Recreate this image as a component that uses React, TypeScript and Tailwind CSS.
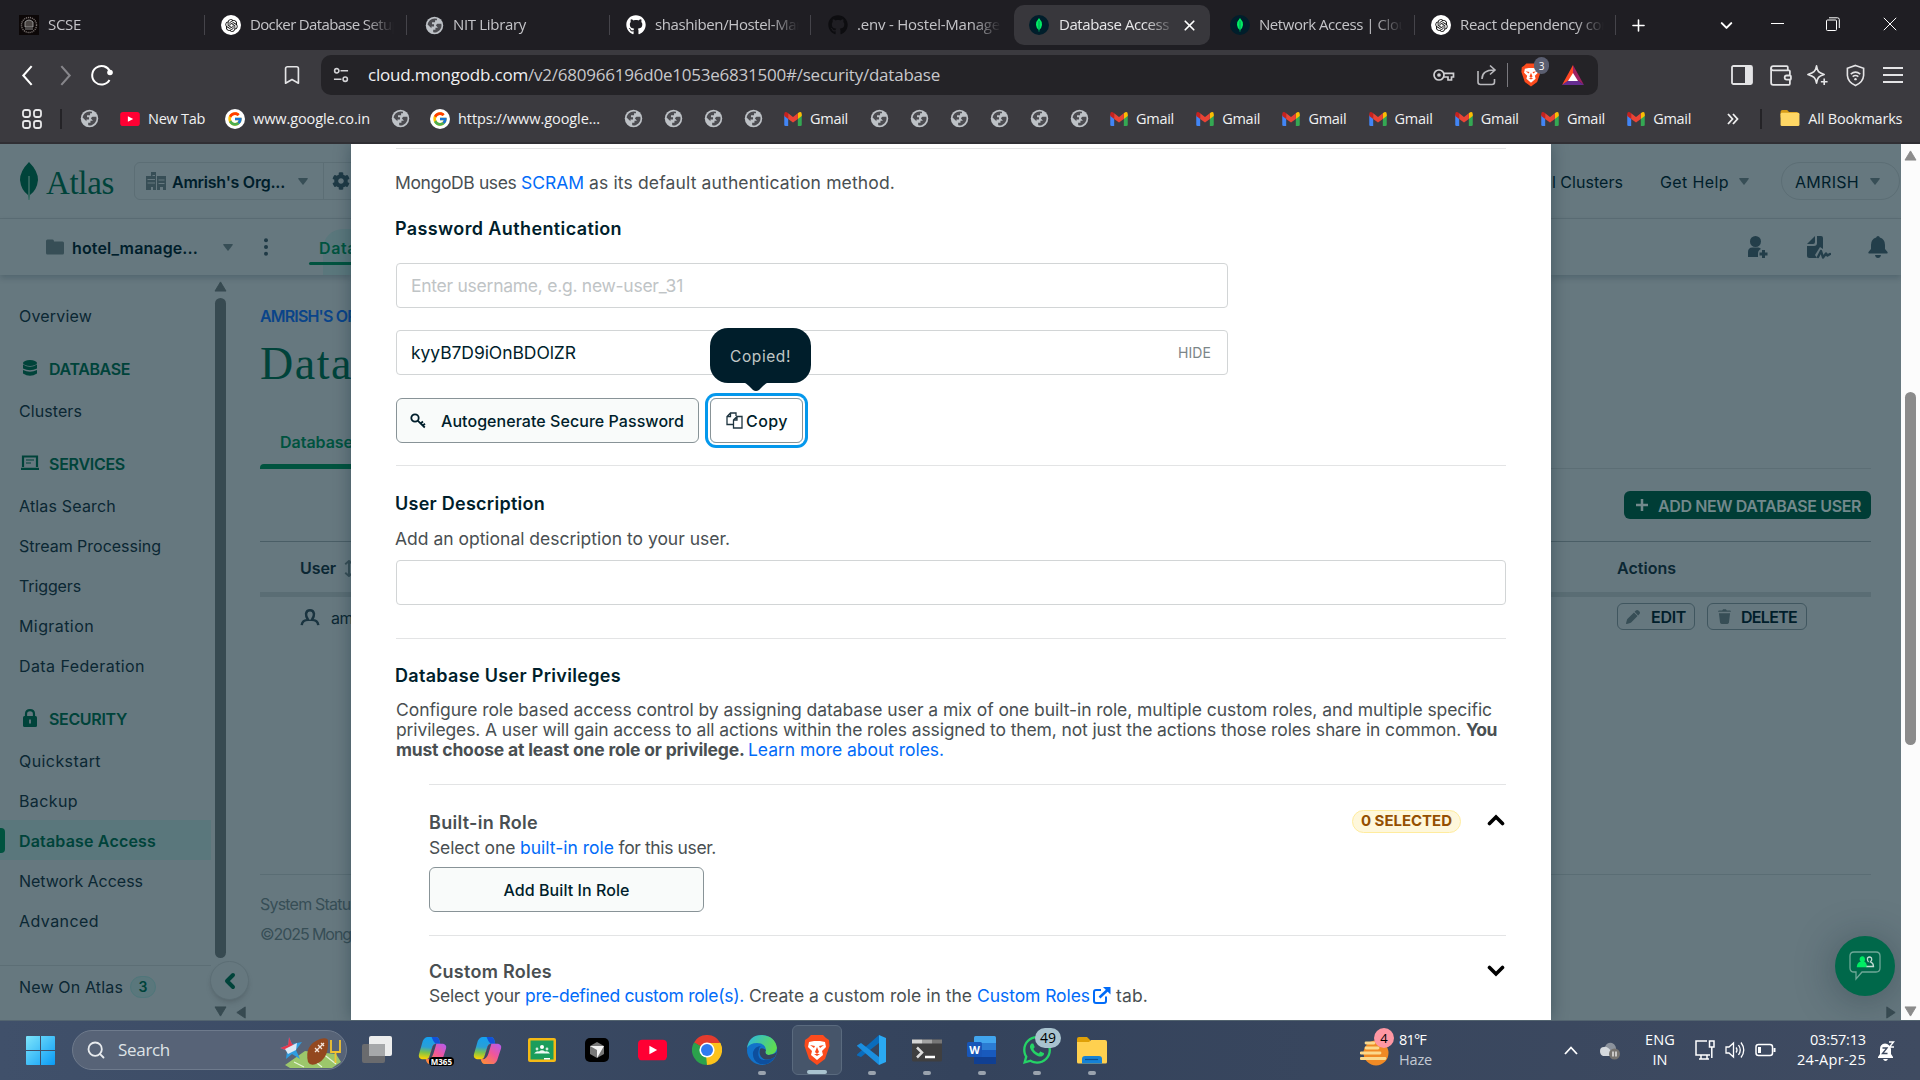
import React, { useLayoutEffect, useRef } from "react";
import { ChevronDown, ChevronLeft, Plus, X, Bookmark, Wallet, Search } from "lucide-react";
import { FaGithub, FaWhatsapp, FaLock, FaPen } from "react-icons/fa6";
import { FaCog as Gear } from "react-icons/fa";
import { FcGoogle } from "react-icons/fc";
import { RiOpenaiFill } from "react-icons/ri";

/* A run of text whose letter spacing is set so that it fills the width w. */
function T({ w, children, className = "" }: { w: number; children: string; className?: string }) {
  const ref = useRef<HTMLSpanElement>(null);
  useLayoutEffect(() => {
    const el = ref.current;
    if (!el) return;
    el.style.letterSpacing = "0px";
    const natural = el.getBoundingClientRect().width;
    el.style.letterSpacing = `${(w - natural) / children.length}px`;
  }, [w, children]);
  return <span ref={ref} className={`inline-block w-max shrink-0 whitespace-pre ${className}`}>{children}</span>;
}

function Cell({ w, children, className = "" }: { w: number; children?: React.ReactNode; className?: string }) {
  return <div className={`flex h-full shrink-0 items-center ${className}`} style={{ width: w }}>{children}</div>;
}

function Globe() {
  return (
    <svg viewBox="0 0 20 20" className="size-[19px] shrink-0">
      <circle cx="10" cy="10" r="9.2" fill="#bdc1c6" />
      <path d="M10 2.6 A7.4 7.4 0 0 0 2.7 9 L6.8 13 V11 H9.5 V8.6 H7.4 V6.6 H10.6 V4.6 H12.6 V2.9 A7 7 0 0 0 10 2.6Z M13 8.2 H17.2 A7.4 7.4 0 0 1 8.6 17.2 V14.6 H11 V12.4 H13.6 L11.4 9.8Z" fill="#4b4b50" />
    </svg>
  );
}
function Gmail() {
  return (
    <svg viewBox="0 0 20 16" className="h-[14px] w-[18px] shrink-0">
      <path d="M0 3 V14.5 Q0 16 1.5 16 H4.5 V6Z" fill="#4285f4" />
      <path d="M20 3 V14.5 Q20 16 18.5 16 H15.5 V6Z" fill="#34a853" />
      <path d="M15.5 1.5 L17 .4 Q20-.8 20 2.5 V4.5 L15.5 8Z" fill="#fbbc04" />
      <path d="M4.5 1.5 L3 .4 Q0-.8 0 2.5 V4.5 L4.5 8Z" fill="#c5221f" />
      <path d="M4.5 1.4 L10 5.7 L15.5 1.4 V8 L10 12 L4.5 8Z" fill="#ea4335" />
    </svg>
  );
}
function Youtube({ className = "h-[14px] w-5" }: { className?: string }) {
  return (
    <svg viewBox="0 0 28 20" className={`shrink-0 ${className}`}>
      <rect width="28" height="20" rx="4" fill="#ff0033" />
      <path d="M11 6 L18.5 10 L11 14Z" fill="#fff" />
    </svg>
  );
}
function OpenAi() {
  return <span className="flex size-5 shrink-0 items-center justify-center rounded-full bg-white"><RiOpenaiFill className="size-[15px] text-black" /></span>;
}
function Mongo() {
  return (
    <svg viewBox="0 0 20 20" className="size-5 shrink-0">
      <circle cx="10" cy="10" r="10" fill="#001e2b" />
      <path d="M10 3 Q13.3 6.5 13 10 Q12.6 13.3 10.3 15 L10 17 L9.7 15 Q7.4 13.3 7 10 Q6.7 6.5 10 3Z" fill="#00ed64" />
      <path d="M10 6 V17" stroke="#00684a" strokeWidth=".6" />
    </svg>
  );
}
function Lion({ className = "" }: { className?: string }) {
  return (
    <svg viewBox="0 0 26 30" className={className}>
      <path d="M7 0 H19 L22 3 L25 5 L25.500 11 L21 24 L13 30 L5 24 L.5 11 L1 5 L4 3Z" fill="#fb4b1d" />
      <path d="M5 7 L10 6 H16 L21 7 L22 12 L18 16 L19 20 L13 25 L7 20 L8 16 L4 12Z" fill="#fff" />
      <path d="M6 10 L11 11 L10 13Z M20 10 L15 11 L16 13Z M13 12 L15 17 L13 19 L11 17Z M10 19 L13 21 L16 19" fill="#fb4b1d" />
    </svg>
  );
}
function Caret({ className = "text-[#374e56]" }: { className?: string }) {
  return <svg viewBox="0 0 10 7" className={`h-[7px] w-[10px] shrink-0 ${className}`}><path d="M.6 0 H9.4 Q10 .3 9.7 .9 L5.5 6.5 Q5 7 4.5 6.5 L.3 .9 Q0 .3 .6 0Z" fill="currentColor" /></svg>;
}
function Tri({ dir, className = "" }: { dir: "up" | "down" | "left" | "right"; className?: string }) {
  const d = { up: "M7 1 L13 11 H1Z", down: "M7 11 L1 1 H13Z", left: "M2 6 L11 0 V12Z", right: "M12 6 L3 0 V12Z" }[dir];
  return <svg viewBox="0 0 14 12" className={`h-[11px] w-[13px] shrink-0 ${className}`}><path d={d} fill="currentColor" stroke="currentColor" strokeWidth="1" strokeLinejoin="round" /></svg>;
}

function Tab({ w, icon, label, lw, sep = true, pl = 17 }: { w: number; icon: React.ReactNode; label: string; lw: number; sep?: boolean; pl?: number }) {
  return (
    <div className="flex h-[50px] shrink-0 items-center" style={{ width: w, paddingLeft: pl }}>
      {icon}
      <div className="-mt-[2px] ml-[9px] w-[144px] shrink-0 overflow-hidden text-[#c4c4c8] [mask-image:linear-gradient(to_right,black_115px,transparent_144px)]">
        <T w={lw}>{label}</T>
      </div>
      <div className={sep ? "ml-auto h-5 w-px bg-[#45444a]" : "hidden"} />
    </div>
  );
}

function TabStrip() {
  return (
    <div className="flex h-[50px] items-center bg-[#1f1e23] text-[15px]">
      <Tab w={205} pl={19} lw={33} label="SCSE" icon={
        <svg viewBox="0 0 20 20" className="size-5 shrink-0"><rect width="20" height="20" fill="#0c0707" /><circle cx="10" cy="10" r="7.5" fill="none" stroke="#77706e" strokeWidth="1.4" strokeDasharray="1.2 .8" /><path d="M6 7 Q10 3 14 7 V12 H6Z M6 14 H14" fill="#4b4644" stroke="#aaa" strokeWidth=".8" /></svg>} />
      <Tab w={202} pl={16} lw={150} label="Docker Database Setup" icon={<OpenAi />} />
      <Tab w={203} lw={73} label="NIT Library" icon={<Globe />} pl={18} />
      <Tab w={201} pl={16} lw={158} label="shashiben/Hostel-Mana" icon={<FaGithub className="size-5 shrink-0 text-white" />} />
      <Tab w={203} lw={143} label=".env - Hostel-Manage" icon={<FaGithub className="size-5 shrink-0 text-[#0d0d10]" />} sep={false} />
      <div className="flex h-10 w-[196px] shrink-0 items-center rounded-[10px] bg-[#38373c] pl-[15px]">
        <Mongo />
        <div className="-mt-[2px] ml-[10px] w-[113px] overflow-hidden text-[#e6e6e8] [mask-image:linear-gradient(to_right,black_85px,transparent_118px)]"><T w={110}>Database Access</T></div>
        <X className="ml-[9px] size-[17px] text-white" strokeWidth={2.4} />
      </div>
      <Tab w={205} pl={20} lw={157} label="Network Access | Cloud" icon={<Mongo />} />
      <Tab w={201} pl={16} lw={150} label="React dependency con" icon={<OpenAi />} />
      <Cell w={86} className="pl-[13px]"><Plus className="size-[19px] text-white" strokeWidth={2} /></Cell>
      <Cell w={48} className="justify-center"><ChevronDown className="size-[19px] text-white" strokeWidth={2.6} /></Cell>
      <Cell w={54} className="justify-center pb-[3px]"><div className="h-px w-[13px] bg-white" /></Cell>
      <Cell w={57} className="justify-center pb-[2px]">
        <svg viewBox="0 0 14 14" className="size-[14px]" fill="none" stroke="#fff"><rect x=".5" y="3" width="10" height="10.5" rx="1" /><path d="M3 .8 H11.5 Q13.3 .8 13.3 2.6 V11" /></svg>
      </Cell>
      <Cell w={58} className="justify-center pb-[2px]"><svg viewBox="0 0 14 14" className="size-[14px]" stroke="#fff"><path d="M.8 .8 L13.2 13.2 M13.2 .8 L.8 13.2" /></svg></Cell>
    </div>
  );
}

function Toolbar() {
  return (
    <div className="flex h-[45px] items-end bg-[#3b3a3f]">
      <div className="flex h-10 w-[321px] shrink-0 items-center text-white">
        <Cell w={46} className="pl-[15px]"><svg viewBox="0 0 24 24" className="size-[25px]" fill="none" stroke="currentColor" strokeWidth="2"><path d="M16 3 L8 12 L16 21" /></svg></Cell>
        <Cell w={38} className="justify-center text-[#87868b]"><svg viewBox="0 0 24 24" className="size-[25px]" fill="none" stroke="currentColor" strokeWidth="2"><path d="M8 3 L16 12 L8 21" /></svg></Cell>
        <Cell w={36} className="justify-center"><svg viewBox="0 0 24 24" className="size-6" fill="none" stroke="currentColor" strokeWidth="2"><path d="M19.5 17 A9.3 9.3 0 1 1 20 8.5" /><circle cx="20" cy="9.5" r="2.8" fill="currentColor" stroke="none" /></svg></Cell>
        <Cell w={201} className="pl-[161px]"><Bookmark className="h-6 w-[22px] text-[#e4e4e6]" strokeWidth={1.8} /></Cell>
      </div>
      <div className="flex h-10 w-[1277px] shrink-0 items-center rounded-[10px] bg-[#242327] pl-[12px] text-[#c8c8cb]">
        <svg viewBox="0 0 17 17" className="size-4 shrink-0" fill="none" stroke="#d4d4d7" strokeWidth="1.7"><circle cx="4" cy="4" r="2.3" /><path d="M8 4 H16 M1 13 H9" /><circle cx="13" cy="13" r="2.3" /></svg>
        <div className="-mt-px ml-[19px] flex text-[17px]"><T w={160} className="text-[#f0f0f2]">cloud.mongodb.com</T><T w={412}>/v2/680966196d0e1053e6831500#/security/database</T></div>
        <svg viewBox="0 0 22 14" className="ml-[493px] h-[14px] w-[22px] shrink-0" fill="none" stroke="#d0d0d3" strokeWidth="1.7"><circle cx="6" cy="7" r="5" /><circle cx="6" cy="7" r="1" fill="#d0d0d3" /><path d="M11 5.3 H20.5 V9 H18.5 V12 H15 V9 H11" /></svg>
        <svg viewBox="0 0 20 22" className="ml-[22px] h-[22px] w-5 shrink-0" fill="none" stroke="#b9b9bd" strokeWidth="1.6"><path d="M1 7 V18 Q1 20.5 3.5 20.5 H15 Q17.5 20.5 17.5 18 V15 M5 15 Q5 6 17 6 M13 1.5 L18 6 L13 10.5" /></svg>
        <div className="ml-[10px] h-6 w-px bg-[#7a797e]" />
        <div className="relative ml-[13px] flex items-center">
          <Lion className="h-[26px] w-5" />
          <span className="absolute -top-[5px] left-[13px] flex h-[17px] w-[15px] items-center justify-center rounded-full bg-[#5a5e70] text-[10px] leading-none text-white">3</span>
        </div>
        <svg viewBox="0 0 22 20" className="ml-[21px] h-5 w-[22px] shrink-0"><path d="M11 0 L0 20 L11 13Z" fill="#ff4724" /><path d="M11 0 L22 20 L11 12Z" fill="#9e1f63" /><path d="M0 20 H22 L11 12Z" fill="#662d91" /><path d="M11 8 L16 16 H6Z" fill="#fff" /></svg>
      </div>
      <div className="flex h-10 flex-1 items-center text-[#e4e4e6]">
        <Cell w={163} className="justify-end pr-[8px]"><svg viewBox="0 0 22 20" className="h-5 w-[22px]"><rect x="1" y="1" width="20" height="18" rx="1.5" fill="none" stroke="currentColor" strokeWidth="1.8" /><path d="M14 1 H21 V19 H14Z" fill="currentColor" /></svg></Cell>
        <Cell w={38} className="justify-center"><Wallet className="size-[25px]" strokeWidth={1.7} /></Cell>
        <Cell w={37} className="justify-center"><svg viewBox="0 0 24 24" className="size-[23px]" fill="none" stroke="currentColor" strokeWidth="1.7" strokeLinejoin="round"><path d="M11 2 C12 8 13 9 19 11 C13 13 12 14 11 20 C10 14 8 13 2 11 C8 9 10 8 11 2Z" fill="none" /><path d="M19 15 V22 M15.5 18.5 H22.5" /></svg></Cell>
        <Cell w={38} className="justify-center"><svg viewBox="0 0 22 24" className="h-[25px] w-[21px]" fill="none" stroke="currentColor" strokeWidth="1.7"><path d="M11 1.5 L19.5 4.5 V12 Q19 19 11 22.5 Q3 19 2.5 12 V4.5Z" /><path d="M6 10.5 Q11 6.5 16 10.5 M8 13.2 Q11 10.8 14 13.2" /><circle cx="11" cy="15.8" r="1.3" fill="currentColor" stroke="none" /></svg></Cell>
        <Cell w={38} className="justify-center"><svg viewBox="0 0 20 16" className="h-4 w-5" stroke="currentColor" strokeWidth="2"><path d="M0 1 H20 M0 8 H20 M0 15 H20" /></svg></Cell>
      </div>
    </div>
  );
}

function Bookmarks() {
  return (
    <div className="flex h-[49px] items-center border-b-2 border-[#302f34] bg-[#3b3a3f] text-[14.5px] text-[#f1f1f2]">
      <Cell w={60} className="pl-[22px]">
        <svg viewBox="0 0 20 20" className="size-5" fill="none" stroke="#e8e8ea" strokeWidth="1.8"><rect x="1" y="1" width="7" height="7" rx="2.2" /><rect x="12" y="1" width="7" height="7" rx="2.2" /><rect x="1" y="12" width="7" height="7" rx="2.2" /><rect x="12" y="12" width="7" height="7" rx="2.2" /></svg>
      </Cell>
      <div className="h-5 w-[2px] shrink-0 bg-[#242327]" />
      <Cell w={58} className="pl-[18px]"><Globe /></Cell>
      <Cell w={105}><Youtube /><T w={57} className="ml-2">New Tab</T></Cell>
      <Cell w={166}><span className="flex size-5 items-center justify-center rounded-full bg-white"><FcGoogle className="size-4" /></span><T w={117} className="ml-2">www.google.co.in</T></Cell>
      <Cell w={39}><Globe /></Cell>
      <Cell w={194}><span className="flex size-5 items-center justify-center rounded-full bg-white"><FcGoogle className="size-4" /></span><T w={142} className="ml-2">https://www.google...</T></Cell>
      {[0, 1, 2, 3].map((i) => <Cell key={i} w={40}><Globe /></Cell>)}
      <Cell w={86}><Gmail /><T w={38} className="ml-2">Gmail</T></Cell>
      {[0, 1, 2, 3, 4, 5].map((i) => <Cell key={i} w={40}><Globe /></Cell>)}
      {[0, 1, 2, 3, 4, 5, 6].map((i) => <Cell key={i} w={86.2}><Gmail /><T w={38} className="ml-2">Gmail</T></Cell>)}
      <Cell w={47} className="pl-[14px]"><svg viewBox="0 0 12 12" className="size-3" fill="none" stroke="#f0f0f0" strokeWidth="1.8"><path d="M1 1 L5.5 6 L1 11 M6 1 L10.5 6 L6 11" /></svg></Cell>
      <div className="h-5 w-[2px] shrink-0 bg-[#242327]" />
      <svg viewBox="0 0 20 18" className="ml-[18px] h-[17px] w-5 shrink-0"><path d="M0 2 Q0 0 2 0 H7 L9 2 H18 V8 H0Z" fill="#d99e1a" /><rect y="3" width="20" height="14" rx="1.5" fill="#ffd765" /></svg>
      <T w={94} className="ml-2">All Bookmarks</T>
    </div>
  );
}

const navItem = "flex h-10 shrink-0 items-center pl-[19px] pt-[2px]";
function NavHead({ icon, label, w }: { icon: React.ReactNode; label: string; w: number }) {
  return (
    <div className="flex h-[55px] shrink-0 items-center pl-5 pt-[11px] font-semibold text-[#00433a]">
      <span className="flex w-5 justify-center">{icon}</span><T w={w} className="ml-[9px] mt-px">{label}</T>
    </div>
  );
}

function LeftSide() {
  return (
    <div className="flex w-[351px] shrink-0 flex-col overflow-hidden bg-[#66787f] font-[Inter,sans-serif] text-[16px] text-[#0b2733]">
      <div className="flex h-[75px] shrink-0 items-center border-b border-[#5c6e75] pl-5">
        <svg viewBox="0 0 18 38" className="h-[38px] w-[18px] shrink-0"><path d="M9 0 Q18 9 18 18 Q17 28 10 33 L9.3 38 H8.7 L8 33 Q1 28 0 18 Q0 9 9 0Z" fill="#00433a" /><path d="M9 14 V38" stroke="#4f7b73" strokeWidth="1.2" /></svg>
        <T w={68} className="ml-2 mt-[6px] font-['Liberation_Serif',serif] text-[33px] text-[#00433a]">Atlas</T>
        <div className="ml-5 flex h-[38px] w-[230px] shrink-0 items-center rounded-l-md border border-[#5c6e75]">
          <svg viewBox="0 0 20 18" className="ml-[11px] h-[18px] w-5 shrink-0 fill-[#374e56]"><path d="M0 4 H5 V0 H10 V18 H7 V15 H5 V18 H0Z M11 4 H20 V18 H17 V15 H14 V18 H11Z" /><path d="M1.5 7.5 H9 M1.5 11 H9 M12.5 8 H18.5 M12.5 11.5 H18.5 M6.5 3.5 H9" stroke="#66787f" strokeWidth="1.2" /></svg>
          <T w={113} className="ml-[6px] mt-[2px] font-semibold text-[#001e2b]">Amrish's Org...</T>
          <Caret className="ml-[13px] text-[#374e56]" />
          <div className="ml-[15px] h-full w-px bg-[#5c6e75]" />
          <Gear className="ml-2 size-[18px] shrink-0 text-[#1f3a46]" />
        </div>
      </div>
      <div className="relative z-10 flex h-14 shrink-0 items-center bg-[#66787f] pl-[46px] shadow-[0_3px_6px_rgba(0,30,43,0.2)]">
        <svg viewBox="0 0 18 16" className="h-4 w-[18px] shrink-0 fill-[#374e56]"><path d="M0 2 Q0 .5 1.5 .5 H6.5 Q8 .5 8 2.5 H16.5 Q18 2.5 18 4 V14 Q18 15.500 16.5 15.5 H1.500 Q0 15.500 0 14Z" /></svg>
        <T w={126} className="ml-[8px] mt-[2px] font-semibold text-[#001e2b]">hotel_manage...</T>
        <Caret className="ml-[25px] text-[#374e56]" />
        <svg viewBox="0 0 4 18" className="ml-[31px] h-[18px] w-1 shrink-0 fill-[#1f3a46]"><circle cx="2" cy="2.200" r="2" /><circle cx="2" cy="9" r="2" /><circle cx="2" cy="15.800" r="2" /></svg>
        <div className="relative ml-[41px] flex h-full w-[60px] shrink-0 items-center pl-[10px]">
          <div className="absolute left-[14px] top-[10px] h-[46px] w-8 rounded-tl-[20px] bg-[#5a777c]" />
          <T w={38} className="relative mt-[2px] font-semibold text-[#00533f]">Data</T>
          <div className="absolute bottom-[10px] left-0 h-[3px] w-full rounded-l bg-[#00533f]" />
        </div>
      </div>
      <div className="flex flex-1">
        <div className="flex w-[211px] shrink-0 flex-col pt-5">
          <div className={navItem}><T w={73}>Overview</T></div>
          <NavHead label="DATABASE" w={81} icon={<svg viewBox="0 0 14 16" className="h-4 w-[14px]" fill="#00433a"><ellipse cx="7" cy="3" rx="7" ry="3" /><path d="M0 4.600 Q7 9 14 4.600 V8.500 Q7 12 0 8.500Z M0 10 Q7 13.500 14 10 V13.500 Q7 18 0 13.500Z" /></svg>} />
          <div className={navItem}><T w={63}>Clusters</T></div>
          <NavHead label="SERVICES" w={76} icon={<svg viewBox="0 0 18 16" className="h-4 w-[18px]" fill="none" stroke="#00433a" strokeWidth="2"><path d="M2 12 V1.500 H16 V12 M0 13.800 H18" strokeWidth="2.200" /><path d="M5 5 H13 M5 8 H10" strokeWidth="1.200" /></svg>} />
          <div className={navItem}><T w={97}>Atlas Search</T></div>
          <div className={navItem}><T w={142}>Stream Processing</T></div>
          <div className={navItem}><T w={62}>Triggers</T></div>
          <div className={navItem}><T w={75}>Migration</T></div>
          <div className={navItem}><T w={126}>Data Federation</T></div>
          <NavHead label="SECURITY" w={78} icon={<svg viewBox="0 0 14 18" className="h-[18px] w-[14px]"><path d="M3 8 V5 Q3 1.200 7 1.200 Q11 1.200 11 5 V8" fill="none" stroke="#00433a" strokeWidth="2.200" /><rect y="7" width="14" height="11" rx="1.500" fill="#00433a" /><path d="M7 10.500 V14.500" stroke="#66787f" strokeWidth="1.800" /></svg>} />
          <div className={navItem}><T w={82}>Quickstart</T></div>
          <div className={navItem}><T w={59}>Backup</T></div>
          <div className={`${navItem} relative bg-[#5a777c] font-semibold text-[#00433a]`}>
            <div className="absolute left-0 top-2 h-[25px] w-[5px] rounded-r bg-[#00533f]" />
            <T w={137}>Database Access</T>
          </div>
          <div className={navItem}><T w={124}>Network Access</T></div>
          <div className={navItem}><T w={80}>Advanced</T></div>
          <div className="mt-[25px] flex h-[42px] items-center border-t border-[#5c6e75] pl-[19px]">
            <T w={104}>New On Atlas</T>
            <span className="ml-[7px] flex h-[22px] w-[26px] items-center justify-center rounded-full border border-[#4f767a] bg-[#5a777c] text-[14px] font-semibold text-[#00433a]">3</span>
          </div>
        </div>
        <div className="relative flex w-[49px] shrink-0 flex-col pl-[3px] pt-[6px] text-[#374a51]">
          <Tri dir="up" />
          <div className="ml-px mt-[6px] h-[660px] w-[11px] rounded-full bg-[#374a51]" />
          <div className="absolute -left-px top-[686px] z-10 flex size-[39px] items-center justify-center rounded-full border border-[#5c6e75] bg-[#66787f] shadow-md"><ChevronLeft className="size-6 text-[#00433a]" strokeWidth={4} /></div>
          <div className="mt-[48px] flex gap-[8px]"><Tri dir="down" /><Tri dir="left" className="h-[13px]" /></div>
        </div>
        <div className="flex flex-1 flex-col whitespace-nowrap">
          <div className="mt-[25px] flex h-8 items-center font-semibold text-[#0a4489]"><T w={108}>AMRISH'S ORG</T></div>
          <div className="mt-[8px] flex h-[46px] items-center font-['Liberation_Serif',serif] text-[46px] text-[#00433a]"><T w={93}>Data</T></div>
          <div className="mt-[38px] flex h-9 items-center pl-5 font-semibold text-[#00533f]"><T w={73}>Database</T></div>
          <div className="mt-[4px] h-[5px] shrink-0 rounded-tl bg-[#00533f]" />
          <div className="mt-[72px] flex h-[51px] items-center border-t border-[#4a5e66] pl-[40px] pt-[2px] font-semibold"><T w={36}>User</T>
            <svg viewBox="0 0 10 18" className="ml-2 h-[17px] w-[10px] shrink-0" fill="none" stroke="#374e56" strokeWidth="2"><path d="M5 1 V17 M1 4.500 L5 1 L9 4.500 M1 13.500 L5 17 L9 13.500" /></svg>
          </div>
          <div className="h-[5px] shrink-0 bg-[#5a6d74]" />
          <div className="flex h-10 items-center pl-10"><svg viewBox="0 0 20 18" className="h-[17px] w-5 shrink-0" fill="none" stroke="#1a3440" strokeWidth="2.600"><path d="M1.200 17 Q2 11.500 8 11.500 Q5.500 8.500 5.800 5 Q6.500 1.300 10 1.300 Q13.500 1.300 14.200 5 Q14.500 8.500 12 11.500 Q18 11.500 18.800 17" /></svg><T w={22} className="ml-[11px] mt-px">am</T></div>
          <div className="mt-[237px] h-px shrink-0 bg-[#5a6d74]" />
          <div className="mt-[14px] flex h-[30px] items-center text-[#374e56]"><T w={98}>System Status</T></div>
          <div className="flex h-[30px] items-center text-[#374e56]"><T w={91}>©2025 Mong</T></div>
        </div>
      </div>
    </div>
  );
}

const outlineBtn = "flex items-center rounded-md border border-[#889397] bg-[#f9fbfa] text-[#001e2b] font-medium";
const link = "text-[#016bf8]";

function Modal() {
  return (
    <div className="relative z-20 flex w-[1200px] shrink-0 flex-col overflow-visible bg-white pl-[45px] pr-[45px] font-[Inter,sans-serif] text-[17.5px] text-[#494f52] shadow-[0_0_16px_rgba(0,30,43,0.35)]">
      <div className="mt-1 h-px shrink-0 bg-[#e3e4e5]" />
      <div className="-ml-px flex h-[66px] shrink-0 items-center pt-[2px]"><T w={126}>MongoDB uses </T><T w={63} className={link}>SCRAM</T><T w={311}> as its default authentication method.</T></div>
      <div className="-ml-px flex h-[27px] shrink-0 items-center text-[18px] font-semibold text-[#001e2b]"><T w={227}>Password Authentication</T></div>
      <div className="mt-[21px] flex h-[45px] w-[832px] shrink-0 items-center rounded border border-[#d2d5d6] pl-[14px] pt-[2px] text-[#bfc4c6]"><T w={272}>Enter username, e.g. new-user_31</T></div>
      <div className="mt-[22px] flex h-[45px] w-[832px] shrink-0 items-center rounded border border-[#d2d5d6] pl-[14px] pr-4 text-[#001e2b]">
        <T w={165} className="mt-[2px]">kyyB7D9iOnBDOlZR</T><T w={33} className="-mt-px ml-auto text-[14px] text-[#7c8689]">HIDE</T>
      </div>
      <div className="mt-[23px] flex h-[45px] shrink-0">
        <div className={`${outlineBtn} w-[303px] pl-[13px] text-[16px]`}>
          <svg viewBox="0 0 16 16" className="size-4 shrink-0" fill="none" stroke="#001e2b" strokeWidth="1.800"><circle cx="5" cy="5" r="3.700" /><path d="M7.700 7.700 L14.800 14.500 M10.500 10.500 L13 8.500 M12.800 12.500 L15 10.800" /></svg>
          <T w={243} className="ml-[15px]">Autogenerate Secure Password</T>
        </div>
        <div className="relative ml-[11px] flex w-[93px] items-center rounded-md border border-[#889397] pl-[15px] text-[16px] font-medium text-[#001e2b] shadow-[0_0_0_2px_white,0_0_0_5px_#0498ec]">
          <svg viewBox="0 0 17 17" className="size-[17px] shrink-0" fill="none" stroke="#1f3540" strokeWidth="1.300"><path d="M10 4 V1 H4.500 L1 4.500 V12.500 H7 M4.500 1 V4.500 H1 M7.500 8 L11 4.500 H16 V16 H7.500Z M11 4.500 V8 H7.500" /></svg>
          <T w={42} className="ml-[3px]">Copy</T>
          <div className="absolute -top-[71px] left-[-1px] flex h-[55px] w-[101px] items-center justify-center rounded-[18px] bg-[#001e2b] pt-[2px] text-[15.5px] font-normal text-[#c1c7c6]">
            <T w={61}>Copied!</T>
            <svg viewBox="0 0 26 9" className="absolute left-[33px] top-[54px] h-[9px] w-[26px]"><path d="M0 0 H26 Q23 1 20 4 L16 8 Q13 10 10 8 L6 4 Q3 1 0 0Z" fill="#001e2b" /></svg>
          </div>
        </div>
      </div>
      <div className="mt-[22px] h-px shrink-0 bg-[#e3e4e5]" />
      <div className="-ml-px mt-[18px] flex h-9 shrink-0 items-center pt-[2px] text-[18px] font-semibold text-[#001e2b]"><T w={150}>User Description</T></div>
      <div className="-ml-px flex h-9 shrink-0 items-center pt-[2px]"><T w={335}>Add an optional description to your user.</T></div>
      <div className="mt-1 h-[45px] shrink-0 rounded border border-[#d2d5d6]" />
      <div className="mt-[33px] h-px shrink-0 bg-[#e3e4e5]" />
      <div className="-ml-px mt-[17px] flex h-9 shrink-0 items-center pt-[2px] text-[18px] font-semibold text-[#001e2b]"><T w={226}>Database User Privileges</T></div>
      <div className="mt-2 flex h-[60px] shrink-0 flex-col leading-5">
        <div className="flex"><T w={1096}>Configure role based access control by assigning database user a mix of one built-in role, multiple custom roles, and multiple specific</T></div>
        <div className="flex"><T w={1070}>privileges. A user will gain access to all actions within the roles assigned to them, not just the actions those roles share in common. </T><T w={31} className="font-bold">You</T></div>
        <div className="flex"><T w={352} className="font-bold">must choose at least one role or privilege. </T><T w={196} className={link}>Learn more about roles.</T></div>
      </div>
      <div className="mt-6 flex flex-1 flex-col pl-[33px]">
        <div className="h-px shrink-0 bg-[#e3e4e5]" />
        <div className="mt-[23px] flex h-[26px] shrink-0 items-center text-[18px] font-semibold"><T w={109} className="mt-[2px]">Built-in Role</T>
          <div className="ml-auto mr-[26px] flex h-[23px] w-[109px] items-center justify-center rounded-full border border-[#ffec9e] bg-[#fef7db] text-[15px] font-bold text-[#944f01]"><T w={91}>0 SELECTED</T></div>
          <svg viewBox="0 0 18 12" className="-mt-[2px] mr-[1px] h-3 w-[18px]" fill="none" stroke="#000" strokeWidth="3.600" strokeLinecap="round"><path d="M2.500 9.500 L9 3 L15.500 9.500" /></svg>
        </div>
        <div className="flex h-[27px] shrink-0 items-center pt-[2px]"><T w={91}>Select one </T><T w={94} className={link}>built-in role</T><T w={102}> for this user.</T></div>
        <div className={`${outlineBtn} mt-[6px] h-[45px] w-[275px] shrink-0 justify-center text-[16px]`}><T w={126}>Add Built In Role</T></div>
        <div className="mt-[23px] h-px shrink-0 bg-[#e3e4e5]" />
        <div className="mt-[21px] flex h-[26px] shrink-0 items-center pt-[2px] text-[18px] font-semibold"><T w={123}>Custom Roles</T>
          <svg viewBox="0 0 18 12" className="ml-auto mr-[1px] h-3 w-[18px]" fill="none" stroke="#000" strokeWidth="3.600" strokeLinecap="round"><path d="M2.500 2.500 L9 9 L15.500 2.500" /></svg>
        </div>
        <div className="flex h-[25px] shrink-0 items-center pt-[2px]"><T w={96}>Select your </T><T w={219} className={link}>pre-defined custom role(s).</T><T w={233}> Create a custom role in the </T><T w={113} className={link}>Custom Roles</T>
          <svg viewBox="0 0 19 17" className="-mt-[3px] ml-[2px] h-[17px] w-[19px] shrink-0" fill="none" stroke="#016bf8" strokeWidth="2"><path d="M9 3 H4 Q2 3 2 5 V14 Q2 16 4 16 H12 Q14 16 14 14 V9.500" /><path d="M7.500 10.500 L15.500 3" strokeWidth="2.600" /><path d="M11 0 H18.500 V7.500Z" fill="#016bf8" stroke="none" /></svg>
          <T w={37}> tab.</T>
        </div>
      </div>
    </div>
  );
}

function RightSide() {
  return (
    <div className="relative flex w-[350px] shrink-0 flex-col overflow-hidden bg-[#66787f] font-[Inter,sans-serif] text-[16px] text-[#001e2b]">
      <div className="flex h-[75px] shrink-0 items-center border-b border-[#5c6e75]">
        <div className="mt-[2px] flex w-[72px] justify-end overflow-hidden"><T w={75}>ll Clusters</T></div>
        <T w={69} className="ml-[37px] mt-[2px]">Get Help</T>
        <Caret className="ml-[10px] text-[#374e56]" />
        <div className="ml-8 flex h-[38px] w-[119px] items-center rounded-full border border-[#5c6e75] pl-[13px]"><T w={64} className="mt-[2px]">AMRISH</T><Caret className="ml-[11px] text-[#374e56]" /></div>
      </div>
      <div className="flex h-14 shrink-0 items-center border-[#5c6e75] pl-[197px] text-[#233e4a] shadow-[0_3px_6px_rgba(0,30,43,0.2)]">
        <svg viewBox="0 0 20 22" className="h-[22px] w-5 shrink-0 fill-current"><circle cx="7.500" cy="5.500" r="5.500" /><path d="M0 21 V16 Q0 11.500 4.500 11.500 H10.500 Q12 11.500 13 13 Q10 14 10 17.500 V21Z" /><path d="M15.500 14 V22 M11.500 18 H19.500" stroke="currentColor" strokeWidth="3" /></svg>
        <svg viewBox="0 0 24 23" className="ml-[39px] h-[23px] w-6 shrink-0 fill-current"><path d="M8 0 V6 Q8 8 6 8 H0Z M10 0 H14 Q16 0 16 2 V13 L13 11 L8 19 L10 22 H2.500 Q0 22 0 19.500 V10 H7 Q10 10 10 7Z" /><path d="M11 21 L14 15 L16 21.500 L19 17.500 L20.500 19.500 L23 18" fill="none" stroke="currentColor" strokeWidth="2.400" strokeLinejoin="round" strokeLinecap="round" /></svg>
        <svg viewBox="0 0 20 22" className="ml-[37px] h-[22px] w-5 shrink-0 fill-current"><path d="M10 0 Q11.500 0 11.800 1.500 Q17 3 17 9 V13 L19.500 16 Q20 17.500 19 17.500 H1 Q0 17.500 .5 16 L3 13 V9 Q3 3 8.200 1.500 Q8.500 0 10 0Z M7 19 H13 Q12.500 22 10 22 Q7.500 22 7 19Z" /></svg>
      </div>
      <div className="mt-[193px] mr-[30px] flex h-[73px] shrink-0 items-center justify-end border-t border-[#5c6e75]">
        <div className="flex h-7 w-[247px] items-center rounded-md bg-[#003d36] pl-3 font-semibold text-[#73898c]"><svg viewBox="0 0 12 12" className="size-3" stroke="currentColor" strokeWidth="2.500"><path d="M6 0 V12 M0 6 H12" /></svg><T w={203} className="ml-[10px] mt-px">ADD NEW DATABASE USER</T></div>
      </div>
      <div className="mr-[30px] flex h-[51px] shrink-0 items-center border-t border-[#4a5e66] pl-[66px] pt-[2px] font-semibold text-[#0b2733]"><T w={59}>Actions</T></div>
      <div className="mr-[30px] h-[5px] shrink-0 bg-[#5a6d74]" />
      <div className="mt-[6px] flex h-[27px] shrink-0 gap-3 pl-[66px] font-semibold">
        <div className="flex w-[78px] items-center rounded-md border border-[#40565f] pl-[8px]"><FaPen className="size-[14px] text-[#374e56]" /><T w={35} className="ml-[11px]">EDIT</T></div>
        <div className="flex w-[100px] items-center rounded-md border border-[#40565f] pl-[10px]"><svg viewBox="0 0 14 16" className="h-[15px] w-[13px] fill-[#374e56]"><path d="M0 3 Q0 1.500 1.500 1.500 H4.500 L5.500 .3 H8.500 L9.500 1.500 H12.500 Q14 1.500 14 3Z M1 4.500 H13 L11.800 14.500 Q11.500 16 10 16 H4 Q2.500 16 2.200 14.500Z" /></svg><T w={56} className="ml-[10px]">DELETE</T></div>
      </div>
      <div className="mt-[244px] mr-[30px] h-px shrink-0 bg-[#5a6d74]" />
      <div className="ml-[284px] mt-[61px] flex size-[60px] shrink-0 items-center justify-center rounded-full bg-[#00684a] shadow-[0_4px_40px_rgba(20,40,50,0.4)]">
        <svg viewBox="0 0 32 30" className="h-[30px] w-8" fill="none" stroke="#6fa898" strokeWidth="1.300"><path d="M5 1 H27 Q31 1 31 5 V17 Q31 21 27 21 H13 L7 28 V21 H5 Q1 21 1 17 V5 Q1 1 5 1Z" /><path d="M8.500 15.500 Q9 11.500 13 11 Q10.500 9 11.500 7 Q13.500 5 15 7 Q16 9.500 14 11 Q17 11.500 17.300 15.500Z" fill="#00ed64" stroke="#00ed64" /><path d="M17.500 15.500 H24.500 Q24.500 12 21.500 11 Q23.500 9 22.500 7 Q20.500 5 18.500 7 Q18 9.500 19.500 11" stroke="#c5ddd5" /></svg>
      </div>
      <Tri dir="right" className="ml-[333px] mt-[10px] h-[13px] text-[#374a51]" />
    </div>
  );
}

function TaskIcon({ children, dot = false, active = false }: { children: React.ReactNode; dot?: boolean; active?: boolean }) {
  return (
    <div className="flex h-full w-[55px] shrink-0 items-center justify-center pb-px">
      <div className={`relative flex h-[50px] w-[50px] items-center justify-center rounded-md ${active ? "border border-[#5a6a7e] bg-[#46556a]" : ""}`}>
        {children}
        {dot && <div className={`absolute bottom-0 h-1 rounded-full ${active ? "w-5 bg-[#a9c3cf]" : "w-2 bg-[#9aa3ae]"}`} />}
      </div>
    </div>
  );
}

function Copilot({ id }: { id: string }) {
  return (
    <svg viewBox="0 0 30 30" className="size-[29px]">
      <defs>
        <linearGradient id={`${id}a`} x1=".4" y1="0" x2=".3" y2="1"><stop offset="0" stopColor="#14a0f0" /><stop offset=".45" stopColor="#2a9fd6" /><stop offset=".7" stopColor="#7cc24a" /><stop offset="1" stopColor="#ffd400" /></linearGradient>
        <linearGradient id={`${id}b`} x1="1" y1="0" x2=".2" y2="1"><stop offset="0" stopColor="#b25cf0" /><stop offset=".5" stopColor="#f0569a" /><stop offset="1" stopColor="#ff8a3c" /></linearGradient>
      </defs>
      <path d="M10 1 H19 Q21 1 22 4 L23 8 H19 Q16 8 15 11 L12 21 Q11 24 8 24 H4 Q0 23 1 19 L5 5 Q7 1 10 1Z" fill={`url(#${id}a)`} />
      <path d="M14 1 H19 Q21 1 22 4 L23 8 H18 Q15.500 5 14 1Z" fill="#1351d8" />
      <path d="M20 29 H12 Q9 29 8 24 Q11 24 12 21 L15 11 Q16 8 19 8 H26 Q30 9 29 13 L25 25 Q23 29 20 29Z" fill={`url(#${id}b)`} />
      <path d="M13.500 16 L15 11 Q16 8 19 8 L16 18 Q14 24 10 24 Q11.500 23 12 21Z" fill="#3b4a63" />
    </svg>
  );
}

function Taskbar() {
  return (
    <div className="flex h-[60px] items-center border-t border-[#53646f] bg-gradient-to-r from-[#40506a] via-[#34435c] to-[#3f4b61] text-[14.500px] text-white">
      <Cell w={72} className="pb-px pl-[26px]">
        <svg viewBox="0 0 29 29" className="size-[29px]"><defs><linearGradient id="win" x1="0" y1="0" x2="1" y2="1"><stop offset="0" stopColor="#7ee5fb" /><stop offset="1" stopColor="#0a9bf5" /></linearGradient></defs><path d="M0 1 Q0 0 1 0 H14 V14 H0Z M15 0 H28 Q29 0 29 1 V14 H15Z M0 15 H14 V29 H1 Q0 29 0 28Z M15 15 H29 V28 Q29 29 28 29 H15Z" fill="url(#win)" /></svg>
      </Cell>
      <div className="-mt-px flex h-10 w-[275px] shrink-0 items-center rounded-full border border-[#6e7a8c] bg-[#576377] pl-[13px]">
        <Search className="size-[20px] text-[#e8ebee]" strokeWidth={2.200} />
        <T w={52} className="ml-3 text-[17px] text-[#dfe3e7]">Search</T>
        <svg viewBox="0 0 62 38" className="ml-[110px] h-[38px] w-[62px] shrink-0">
          <path d="M5 34 L25 20 L56 23 L61 31 L52 37 H10Z" fill="#9cc76b" /><path d="M14 31 L24 36 M28 25 L42 36 M42 22 L56 33" stroke="#e6f5d6" strokeWidth="1.200" />
          <path d="M9 6 L12 13 L22 11 L16 19 L20 28 L12 23 L6 28 L7 20 L0 17 L8 14Z" fill="#2f9de0" /><path d="M9 6 L12 13 L15 14 L8 20 L0 17 L8 14Z" fill="#e5394c" /><path d="M5 18 L17 12 L16 19 L8 23Z" fill="#dce9f5" />
          <path d="M28 31 Q24 14 40 8 Q48 6 48 10 Q49 28 36 33 Q30 35 28 31Z" fill="#93481f" /><path d="M35 21 L44 12 M35 17 L39 21 M38 14 L42 18 M41 12 L44 15" stroke="#f5e6dc" strokeWidth="1.300" />
          <path d="M51 9 V21 H60 V9 M55.500 21 V32" fill="none" stroke="#f2c230" strokeWidth="1.800" />
        </svg>
      </div>
      <div className="ml-[2.500px] flex h-full">
        <TaskIcon><svg viewBox="0 0 30 28" className="h-7 w-[30px]"><rect y="8" width="23" height="19" rx="2" fill="#6a6b6e" /><rect x="7" width="23" height="20" rx="2" fill="#eceded" /><rect x="7" y="8" width="16" height="12" fill="#a6a8aa" /></svg></TaskIcon>
        <TaskIcon><Copilot id="m" /><span className="absolute bottom-[9px] right-[3px] rounded-sm bg-black px-[2px] text-[8px] font-bold leading-[9px] text-white">M365</span></TaskIcon>
        <TaskIcon><Copilot id="c" /></TaskIcon>
        <TaskIcon><svg viewBox="0 0 28 24" className="h-6 w-7"><rect width="28" height="24" rx="2" fill="#f5ba15" /><rect x="2.500" y="2.500" width="23" height="19" fill="#1a9d5c" /><circle cx="14" cy="9" r="2" fill="#fff" /><circle cx="9" cy="11" r="1.400" fill="#cfeadb" /><circle cx="19" cy="11" r="1.400" fill="#cfeadb" /><path d="M6 15.500 Q9 12.500 11 13.500 Q14 11 17 13.500 Q20 12.500 22 15.500Z" fill="#eefaf3" /><path d="M16 20 H22 V21.500 H16Z" fill="#fff" /></svg></TaskIcon>
        <TaskIcon><svg viewBox="0 0 24 24" className="size-6"><rect width="24" height="24" rx="5" fill="#000" /><path d="M12 4 L19 8 V16 L12 20 L5 16 V8Z" fill="#777" /><path d="M5 8 H19 L12 20 V12Z" fill="#f2f2f2" /></svg></TaskIcon>
        <TaskIcon><Youtube className="h-[22px] w-[29px]" /></TaskIcon>
        <TaskIcon><svg viewBox="0 0 30 30" className="size-[30px]"><path d="M15 15 L2 7.500 A15 15 0 0 1 28 7.500Z" fill="#e33b2e" /><path d="M15 15 L28 7.500 A15 15 0 0 1 15 30Z" fill="#fcc31c" /><path d="M15 15 L15 30 A15 15 0 0 1 2 7.500Z" fill="#2ba24c" /><path d="M15 8 H28.300 Q30 12 29.900 16 L22 15Z M15 30 L21 19 L14 20Z" fill="#fcc31c" /><path d="M2 7.500 L9 19 L15 15Z" fill="#2ba24c" /><circle cx="15" cy="15" r="7.600" fill="#fff" /><circle cx="15" cy="15" r="6" fill="#2f7bef" /></svg></TaskIcon>
        <TaskIcon dot><svg viewBox="0 0 30 30" className="size-[30px]"><defs><linearGradient id="eg" x1="0" y1="0" x2="1" y2=".4"><stop offset="0" stopColor="#2ab5e8" /><stop offset="1" stopColor="#5edc52" /></linearGradient></defs><circle cx="15" cy="15" r="15" fill="#1272c9" /><path d="M0 13 Q2 0 15 0 Q28 1 30 13 Q29 20 21 20 Q17 19 19 15 Q18 8 10 8 Q3 8 0 13Z" fill="url(#eg)" /><path d="M12 14 Q9 26 19 25 Q24 25 28 22 Q22 31 13 29 Q5 26 6 17 Q8 11 14 11 Q12 12 12 14Z" fill="#0d4f9e" /><path d="M19 15 Q17 19 21 20 Q26 20.500 30 17 L28 22 Q23 25 18 24.500 Q11 22 13 14 Q15 12 19 15Z" fill="#34435c" /></svg></TaskIcon>
        <TaskIcon dot active><Lion className="h-[30px] w-[26px]" /></TaskIcon>
        <TaskIcon dot><svg viewBox="0 0 30 30" className="size-[30px]"><path d="M22 0 L29 3 V27 L22 30Z" fill="#2aa9f3" /><path d="M0 19.500 L22 0 V8 L4 22 L0 20.500Z" fill="#0a6cbc" /><path d="M0 10.500 L4 8 L22 22 V30 L0 11Z" fill="#1b8fe0" /></svg></TaskIcon>
        <TaskIcon dot><svg viewBox="0 0 30 22" className="h-[23px] w-[30px]"><rect width="30" height="22" rx="1.500" fill="#3f3f40" /><path d="M0 0 H10 V4 H0Z" fill="#d5d5d5" /><path d="M10 0 H20 V4 H10Z" fill="#a3a3a3" /><path d="M20 0 H30 V4 H20Z" fill="#777" /><path d="M5 8 L10 13 L5 18" fill="none" stroke="#ddd" strokeWidth="2.500" /><path d="M13 17.500 H23" stroke="#fff" strokeWidth="2.500" /></svg></TaskIcon>
        <TaskIcon dot><svg viewBox="0 0 30 28" className="h-7 w-[30px]"><rect x="7" width="22" height="28" rx="1.500" fill="#41a5ee" /><path d="M7 7 H29 V14 H7Z" fill="#2b7cd3" /><path d="M7 14 H29 V21 H7Z" fill="#185abd" /><path d="M7 21 H29 V28 H7Z" fill="#103f91" /><rect y="6" width="15" height="15" rx="1.500" fill="#1856b8" /><text x="7.500" y="17.500" fontSize="11" fontWeight="700" fill="#fff" textAnchor="middle">W</text></svg></TaskIcon>
        <TaskIcon dot><FaWhatsapp className="size-[32px] text-[#25d366]" /><span className="absolute left-[23px] top-[3px] flex h-5 w-[26px] items-center justify-center rounded-full bg-[#a9c3cf] text-[14px] leading-none text-black">49</span></TaskIcon>
        <TaskIcon dot><svg viewBox="0 0 30 27" className="h-[27px] w-[30px]"><path d="M0 2 Q0 0 2 0 H10 L13 3 V9 H0Z" fill="#dfa007" /><path d="M0 5 H12 L14 3 H28 Q30 3 30 5 V25 Q30 26.500 28.500 26.500 H1.500 Q0 26.500 0 25Z" fill="#ffd04f" /><path d="M5 26.500 V22 Q5 19 8 19 H22 Q25 19 25 22 V26.500Z" fill="#1682d5" /><path d="M8 22.500 H21" stroke="#0a4f93" strokeWidth="1.200" /></svg></TaskIcon>
      </div>
      <div className="relative ml-[240.500px] flex h-full w-[39px] shrink-0 items-center">
        <svg viewBox="0 0 30 26" className="mt-1 h-[26px] w-[30px]"><circle cx="16" cy="13" r="12.500" fill="#f08a24" /><path d="M6 3 H14 M6 8 H18 M1 13 H20 M1 18.500 H25" stroke="#fbd98c" strokeWidth="2.800" strokeLinecap="round" /></svg>
        <span className="absolute left-[14px] top-[7px] flex size-5 items-center justify-center rounded-full bg-[#ff97a3] text-[13px] leading-none text-black">4</span>
      </div>
      <div className="-mt-[2px] flex w-[160px] shrink-0 flex-col items-start leading-5"><T w={27}>81°F</T><T w={33} className="text-[#c3cad3]">Haze</T></div>
      <Cell w={24} className="justify-center"><svg viewBox="0 0 14 9" className="h-[9px] w-[14px]" fill="none" stroke="#fff" strokeWidth="1.800"><path d="M1 8 L7 1.500 L13 8" /></svg></Cell>
      <Cell w={54} className="justify-center"><svg viewBox="0 0 22 18" className="h-[18px] w-[22px]"><path d="M6 5 Q8 0 13 1 Q18 3 17 10 H4Z" fill="#8b929c" /><path d="M1 9 Q1 5 5 5 Q8 4 12 9 V14 H4 Q1 13 1 9Z" fill="#d5d9dd" /><circle cx="15.500" cy="12" r="5.500" fill="#76736f" /><path d="M14 9.500 V14.500 M17 9.500 V14.500" stroke="#fff" strokeWidth="1.200" /></svg></Cell>
      <Cell w={46} className="flex-col items-center justify-center pb-px leading-5"><T w={30}>ENG</T><T w={15}>IN</T></Cell>
      <Cell w={32} className="justify-end pb-[2px]"><svg viewBox="0 0 20 20" className="size-5" fill="none" stroke="#fff" strokeWidth="1.500"><path d="M12 1 H1 V15 H15 M4 19 H14 M6 15 V19 M12 15 V19 M14.500 1 H19 V7 H14.500Z M16.800 7 V18" /></svg></Cell>
      <Cell w={31} className="justify-end pb-[2px]"><svg viewBox="0 0 21 18" className="h-[18px] w-[21px]" fill="none" stroke="#fff" strokeWidth="1.300"><path d="M1 6 H4 L8.500 2 V16 L4 12 H1Z M11 6.500 Q13 9 11 11.500 M13.500 4 Q17 9 13.500 14 M16 1.500 Q21.500 9 16 16.500" /></svg></Cell>
      <Cell w={30} className="justify-end pb-[2px]"><svg viewBox="0 0 21 13" className="h-[14px] w-[21px]" fill="none" stroke="#fff" strokeWidth="1.500"><rect x="1" y="1" width="16.500" height="11" rx="2.500" /><path d="M4.500 3.500 V9.500" strokeWidth="3" /><path d="M19.500 4.500 V8.500" strokeWidth="2" /></svg></Cell>
      <div className="-mt-[2px] flex w-[90px] shrink-0 flex-col items-end leading-5"><T w={56}>03:57:13</T><T w={69}>24-Apr-25</T></div>
      <svg viewBox="0 0 18 20" className="ml-[11px] h-[20px] w-[18px] shrink-0"><path d="M1 16 L3 13 V8 Q3 3 8 2.500 Q13 3 14 8 V13 L16 16 V17 H1Z M6 18 H11 Q10 20 8.500 20 Q7 20 6 18Z" fill="#fff" /><path d="M5.500 7 H10 L5.500 12.500 H10.500" fill="none" stroke="#3f4b61" strokeWidth="1.400" /><path d="M12 1 H16.500 L12.500 6 H17" fill="none" stroke="#fff" strokeWidth="1.400" /></svg>
    </div>
  );
}

export default function App() {
  return (
    <div className="flex h-[1080px] w-[1920px] flex-col overflow-hidden bg-[#1f1e23] font-['Open_Sans',sans-serif]">
      <TabStrip />
      <Toolbar />
      <Bookmarks />
      <div className="flex h-[876px] shrink-0 overflow-hidden">
        <LeftSide />
        <Modal />
        <RightSide />
        <div className="flex w-[19px] shrink-0 flex-col items-center bg-[#fcfcfc] pt-[6px] text-[#8b8b8b]">
          <Tri dir="up" />
          <div className="mt-[231px] h-[353px] w-[11px] rounded-full bg-[#8b8b8b]" />
          <Tri dir="down" className="mt-[261px]" />
        </div>
      </div>
      <Taskbar />
    </div>
  );
}
